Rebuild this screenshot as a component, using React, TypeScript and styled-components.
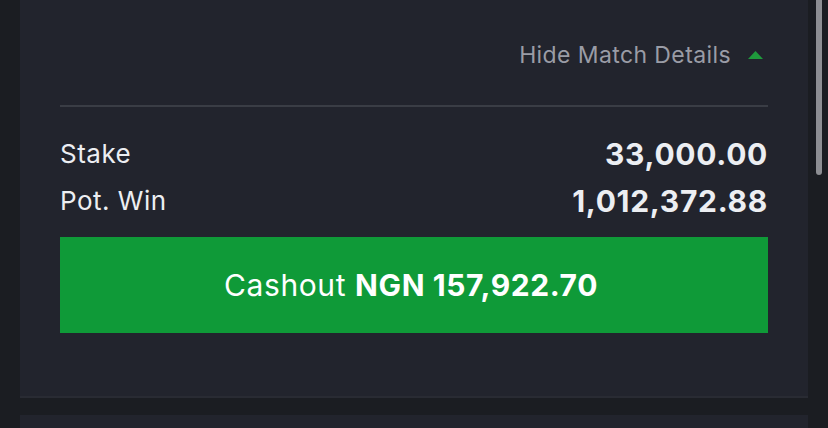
import React from "react";
import styled, { createGlobalStyle } from "styled-components";

const Global = createGlobalStyle`
  html, body { margin: 0; padding: 0; background: #1b1d22; }
  body { font-family: Inter, "Noto Sans", "Liberation Sans", sans-serif; overflow: hidden; }
  #root { width: 828px; height: 428px; }
`;

const Page = styled.div`
  position: relative;
  width: 828px;
  height: 428px;
  box-sizing: border-box;
  padding: 0 20px;
  display: flex;
  flex-direction: column;
  gap: 17px;
  overflow: hidden;
`;

const Card = styled.section`
  background: #22242d;
  border-bottom: 2px solid #292b33;
  padding: 38px 40px 63px;
  display: flex;
  flex-direction: column;
`;

const NextCard = styled.section`
  background: #22242d;
  flex: 1;
`;

const Toggle = styled.div`
  display: flex;
  justify-content: flex-end;
  align-items: center;
  gap: 17px;
  height: 34px;
  font-size: 23px;
  letter-spacing: 0.4px;
  color: #9a9ca6;
  padding-right: 5px;
`;

const Divider = styled.hr`
  border: none;
  height: 2px;
  background: #3a3d45;
  margin: 33px 0 0;
`;

const Rows = styled.div`
  display: flex;
  flex-direction: column;
  padding-top: 23px;
`;

const Row = styled.div`
  display: flex;
  justify-content: space-between;
  align-items: center;
  height: 47px;
  color: #eceef2;
`;

const Label = styled.span`
  font-size: 26px;
  letter-spacing: 0.5px;
  font-weight: 400;
`;

const Value = styled.span`
  font-size: 30px;
  letter-spacing: 0.7px;
  font-weight: 700;
`;

const CashoutButton = styled.button`
  margin-top: 13px;
  height: 96px;
  border: none;
  background: #0f9a38;
  color: #ffffff;
  font-family: inherit;
  font-size: 30px;
  letter-spacing: 0.6px;
  font-weight: 400;
  display: flex;
  align-items: center;
  justify-content: center;
  gap: 9px;
  padding: 0 6px 0 0;
  b { font-weight: 700; }
`;

const Scrollbar = styled.div`
  position: absolute;
  left: 816px;
  top: -10px;
  width: 6px;
  height: 185px;
  border-radius: 3px;
  background: #8d8e93;
`;

const Caret = () => (
  <svg width="15" height="8" viewBox="0 0 15 8">
    <polygon points="7.5,0 15,8 0,8" fill="#1f9a3c" />
  </svg>
);

export default function App() {
  return (
    <>
      <Global />
      <Page>
        <Card>
          <Toggle>
            <span>Hide Match Details</span>
            <Caret />
          </Toggle>
          <Divider />
          <Rows>
            <Row>
              <Label>Stake</Label>
              <Value>33,000.00</Value>
            </Row>
            <Row>
              <Label>Pot. Win</Label>
              <Value>1,012,372.88</Value>
            </Row>
          </Rows>
          <CashoutButton>
            <span>Cashout</span>
            <b>NGN 157,922.70</b>
          </CashoutButton>
        </Card>
        <NextCard />
        <Scrollbar />
      </Page>
    </>
  );
}
